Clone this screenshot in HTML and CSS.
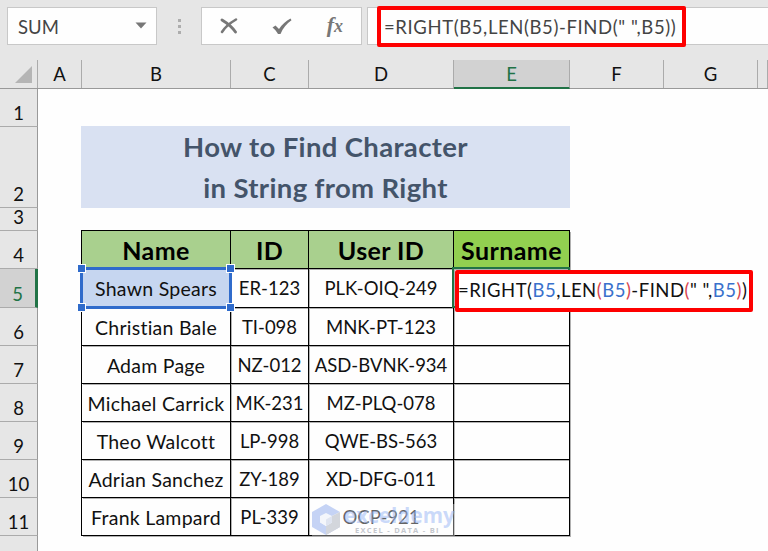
FILE: index.html
```
<!DOCTYPE html>
<html lang="en">
<head>
    <meta charset="UTF-8">
    <meta name="viewport" content="width=device-width, initial-scale=1.0">
    <title>How to Find Character in String from Right</title>
    <link rel="stylesheet" href="styles.css">
</head>
<body>
    <div class="toolbar">
        <div class="name-box">
            <span>SUM</span>
            <svg width="12" height="7" viewBox="0 0 12 7"><path d="M0.5 0.5h11L6 6.5z" fill="#777"/></svg>
        </div>
        <div class="dots"><i></i><i></i><i></i></div>
        <div class="buttons">
            <svg width="18" height="16" viewBox="0 0 18 16" fill="none" stroke="#777" stroke-linecap="round"><path d="M2 2C7 5 12 9 15.500 14" stroke-width="2.900"/><path d="M16 1.500C10 5 5 9 2 14" stroke-width="2.500"/></svg>
            <svg width="20" height="17" viewBox="0 0 20 17"><path d="M0.500 9.500L3.500 7.500L7 11C10 6.500 14 3 18.500 0.500L19.500 2.200C14.500 5.500 11 10 8.500 16H6C4.500 13.500 3 11.500 0.500 9.500z" fill="#777"/></svg>
            <span class="fx">f<small>x</small></span>
        </div>
        <div class="formula"><span class="mark">=RIGHT(B5,LEN(B5)-FIND(" ",B5))</span></div>
    </div>

    <div class="sheet">
        <div class="row cols">
            <div class="corner"><svg width="17" height="17" viewBox="0 0 17 17"><path d="M17 0v17H0z" fill="#b5b5b5"/></svg></div>
            <div>A</div><div>B</div><div>C</div><div>D</div><div class="active">E</div><div>F</div><div>G</div><div></div>
        </div>
        <div class="row"><div class="num">1</div></div>
        <div class="row r2">
            <div class="num">2</div><div></div>
            <h1>How to Find Character<br>in String from Right</h1>
        </div>
        <div class="row r3">
            <div class="num">3</div><div></div>
            <div class="line"></div>
        </div>
        <div class="row data head">
            <div class="num">4</div><div class="edge"></div>
            <div class="cell">Name</div><div class="cell">ID</div><div class="cell">User ID</div><div class="cell surname">Surname</div>
        </div>
        <div class="row data r5">
            <div class="num active">5</div><div class="edge"></div>
            <div class="cell name picked">Shawn Spears<i class="tl"></i><i class="tr"></i><i class="bl"></i><i class="br"></i></div>
            <div class="cell">ER-123</div><div class="cell">PLK-OIQ-249</div>
            <div class="cell editing">
                <div class="edit">=RIGHT(<b>B5</b>,LEN<em>(</em><b>B5</b><em>)</em>-FIND<em>(</em>" ",<b>B5</b><em>)</em>)</div>
            </div>
        </div>
        <div class="row data">
            <div class="num">6</div><div class="edge"></div>
            <div class="cell name">Christian Bale</div><div class="cell">TI-098</div><div class="cell">MNK-PT-123</div><div class="cell"></div>
        </div>
        <div class="row data">
            <div class="num">7</div><div class="edge"></div>
            <div class="cell name">Adam Page</div><div class="cell">NZ-012</div><div class="cell">ASD-BVNK-934</div><div class="cell"></div>
        </div>
        <div class="row data">
            <div class="num">8</div><div class="edge"></div>
            <div class="cell name">Michael Carrick</div><div class="cell">MK-231</div><div class="cell">MZ-PLQ-078</div><div class="cell"></div>
        </div>
        <div class="row data">
            <div class="num">9</div><div class="edge"></div>
            <div class="cell name">Theo Walcott</div><div class="cell">LP-998</div><div class="cell">QWE-BS-563</div><div class="cell"></div>
        </div>
        <div class="row data">
            <div class="num">10</div><div class="edge"></div>
            <div class="cell name">Adrian Sanchez</div><div class="cell">ZY-189</div><div class="cell">XD-DFG-011</div><div class="cell"></div>
        </div>
        <div class="row data">
            <div class="num">11</div><div class="edge"></div>
            <div class="cell name">Frank Lampard</div><div class="cell">PL-339</div>
            <div class="cell">OCP-921
                <div class="watermark">
                    <svg width="28" height="31" viewBox="0 0 28 31">
                        <path d="M14 0L28 8L14 15L8 12V22L0 23V8z" fill="#c5d3f5"/>
                        <path d="M0 23L8 18L14 22L28 12V23L14 31z" fill="#c5d3f5"/>
                        <path d="M28 8V23L14 31V22L20 18.500V12z" fill="#d3d6dc"/>
                        <path d="M14 9L20 12V18.500L14 22L8 18.500V12z" fill="#f4f6fb"/>
                        <path d="M14 15.500L20 12V18.500L14 22z" fill="#dfe4f0"/>
                    </svg>
                    <div class="brand">exceldemy<small>EXCEL - DATA - BI</small></div>
                </div>
            </div>
            <div class="cell"></div>
        </div>
        <div class="row rest"><div class="num"></div></div>
    </div>
</body>
</html>
```
FILE: styles.css
```
* {
    box-sizing: border-box;
}

body {
    margin: 0;
    height: 551px;
    overflow: hidden;
    background-color: #fefefe;
    font-family: Lato, sans-serif;
    font-size: 18.5px;
    font-variant-ligatures: none;
    color: #111;
}

svg {
    display: block;
}

/* formula bar */
.toolbar {
    display: flex;
    height: 60px;
    padding: 7px 0 0 7px;
    background-color: #e6e6e6;
    color: #444;
}

.name-box, .buttons, .formula {
    height: 38px;
    border: 1px solid #c8c8c8;
    background-color: #fefefe;
    display: flex;
    align-items: center;
}

.name-box {
    width: 150px;
    padding: 2px 9px 0 10px;
    justify-content: space-between;
}

.name-box svg {
    margin-top: -4px;
}

.dots {
    width: 44px;
    padding-top: 12px;
    display: flex;
    flex-direction: column;
    align-items: center;
    gap: 3px;
}

.dots i {
    width: 3px;
    height: 3px;
    background-color: #adadad;
}

.buttons {
    width: 161px;
    padding: 0 18px;
    justify-content: space-between;
}

.fx {
    font: italic bold 22px/30px "Liberation Serif", serif;
    color: #777;
    padding-bottom: 1px;
}

.fx small {
    font-size: 18px;
}

.formula {
    flex: 1;
    margin-left: 5px;
    border-right: none;
    padding-left: 9px;
}

.mark {
    flex: none;
    width: 309px;
    height: 41px;
    border: 4px solid #fe0000;
    border-radius: 2px;
    padding-left: 3px;
    line-height: 35px;
    letter-spacing: 0.6px;
    white-space: nowrap;
}

/* grid */
.row {
    display: grid;
    grid-template-columns: 38px 44px 149px 78px 145px 116px 94px 94px 1fr;
    grid-template-rows: 100%;
    height: 38px;
}

.cols {
    height: 29px;
    background-color: #e6e6e6;
    border-bottom: 1px solid #999;
    text-align: center;
    line-height: 28px;
}

.cols div {
    border-right: 1px solid #ababab;
}

.cols .corner {
    padding: 6px 0 0 15px;
}

.cols .active {
    height: 29px;
    background-color: #d2d2d2;
    border-bottom: 2px solid #217346;
    color: #217346;
}

.num {
    background-color: #e6e6e6;
    border-right: 1px solid #999;
    border-bottom: 1px solid #ababab;
    display: flex;
    align-items: flex-end;
    justify-content: center;
    line-height: 22px;
    padding-bottom: 2px;
}

.num.active {
    background-color: #d2d2d2;
    border-right: 3px solid #217346;
    color: #217346;
}

.r2 {
    height: 81px;
}

h1 {
    grid-column: span 4;
    margin: -1px 0 0 -1px;
    background-color: #d9e1f2;
    color: #44546a;
    font-size: 27.5px;
    line-height: 41px;
    letter-spacing: 0.35px;
    text-align: center;
}

.r3 {
    height: 23px;
}

.line {
    grid-column: span 4;
    margin-left: -1px;
    border-bottom: 1px solid #000;
}

.edge, .cell {
    border-right: 1px solid #000;
}

.cell {
    position: relative;
    border-bottom: 1px solid #000;
    box-shadow: 1px 1px 0 rgba(0, 0, 0, 0.3);
    text-align: center;
    line-height: 39px;
    white-space: nowrap;
}

.name {
    font-size: 19.5px;
    letter-spacing: 0.25px;
}

.head .cell {
    background-color: #a9d08e;
    font-size: 25px;
    line-height: 38px;
    letter-spacing: 0.4px;
    font-weight: bold;
    color: #000;
}

.head .surname {
    background-color: #92d050;
}

.r5 {
    height: 39px;
}

.picked {
    background-color: #c6d6f0;
    z-index: 1;
}

.picked::before {
    content: "";
    position: absolute;
    inset: -2px;
    border: 3px solid #2f6bcb;
}

.picked i {
    position: absolute;
    z-index: 1;
    width: 9px;
    height: 9px;
    border: 1px solid #fff;
    background-color: #2f6bcb;
}

.tl { left: -5px; top: -5px; }
.tr { right: -5px; top: -5px; }
.bl { left: -5px; bottom: -5px; }
.br { right: -5px; bottom: -5px; }

.editing {
    border-bottom-color: #217346;
    z-index: 1;
}

.editing::before {
    content: "";
    position: absolute;
    inset: -2px -1px -1px -2px;
    border: 2px solid #217346;
}

.edit {
    position: absolute;
    left: 1px;
    top: 1px;
    z-index: 2;
    width: 298px;
    height: 42px;
    border: 4px solid #fe0000;
    border-radius: 2px;
    background-color: #fff;
    line-height: 32px;
    letter-spacing: 0.5px;
    text-align: left;
    text-indent: -1px;
}

.edit b {
    font-weight: normal;
    color: #3a71cc;
}

.edit em {
    font-style: normal;
    color: #d8444f;
}

/* watermark */
.watermark {
    position: absolute;
    left: 3px;
    top: 6px;
    z-index: 1;
    width: 143px;
    height: 32px;
    display: flex;
    gap: 4px;
    background-color: rgba(255, 255, 255, 0.35);
}

.watermark svg {
    flex: none;
}

.brand {
    font: bold 20.7px/22px "Open Sans", sans-serif;
    color: rgba(150, 180, 245, 0.5);
    text-align: left;
}

.brand small {
    display: block;
    padding-left: 11px;
    font-size: 7.5px;
    line-height: 8px;
    letter-spacing: 1.3px;
    color: #c4c7cd;
}

.rest {
    height: 16px;
}
```
